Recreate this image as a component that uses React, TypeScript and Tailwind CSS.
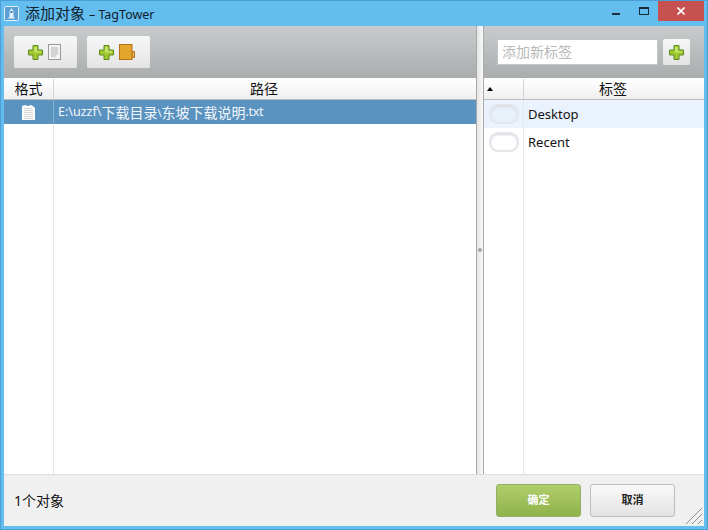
const cjk = "font-['Noto_Sans','Noto_Sans_CJK_SC',sans-serif]";

function PlusIcon() {
  return (
    <svg width="15" height="15" viewBox="0 0 15 15" className="shrink-0">
      <path d="M5 .5h5v4.500h4.500v5H10v4.500H5V10H.5V5H5z" fill="#9cc82e" stroke="#5f8a1e" />
      <path d="M6 2h3v4h4v1.500H6z" fill="#c4e36a" />
    </svg>
  );
}

function DocIcon() {
  return (
    <svg width="13" height="16" viewBox="0 0 13 16" className="shrink-0">
      <rect x=".5" y=".5" width="12" height="15" fill="#f2f2f2" stroke="#9a9a9a" />
      <path d="M3 4h7M3 6h7M3 8h7M3 10h7M3 12h5" stroke="#b5b5b5" />
    </svg>
  );
}

function FolderIcon() {
  return (
    <svg width="16" height="16" viewBox="0 0 16 16" className="shrink-0">
      <path d="M13 7.500h2.500v6H13z" fill="#f0c060" stroke="#b86f1c" />
      <rect x=".5" y=".5" width="12.500" height="15" fill="#e3a52b" stroke="#b86f1c" />
    </svg>
  );
}

function FileRowIcon() {
  return (
    <svg width="13" height="15" viewBox="0 0 13 15">
      <path d="M0 1l3-1 3 1 3-1 2 1 2 2v12H0z" fill="#fbfbfb" />
      <path d="M2 3.500h8M2 5.500h9M2 7.500h9M2 9.500h9M2 11.500h9M2 13.500h9" stroke="#d6d6d6" />
    </svg>
  );
}

function ToolButton({ children }: { children: React.ReactNode }) {
  return (
    <button className="flex h-[33px] w-[63px] items-center justify-center gap-[5px] rounded-[2px] border-b border-b-[#b4b6b6] bg-gradient-to-b from-[#f7f7f7] to-[#e4e4e4] pr-[3px]">
      {children}
    </button>
  );
}

function TagRow({ label, active }: { label: string; active?: boolean }) {
  return (
    <div className={`flex h-[28px] ${active ? "bg-[#eaf3fd]" : ""}`}>
      <div className="flex w-[40px] items-center justify-center border-r border-r-[#e3e8ec]">
        <div
          className={`h-[20px] w-[30px] rounded-[9px] border-2 border-[#e2e6ea] shadow-[inset_0_1px_2px_#d5dade] ${active ? "bg-[#e8f0fa]" : "bg-white"}`}
        />
      </div>
      <div className="flex items-center pl-[4px] pt-[1px] text-[13px] text-[#111]">{label}</div>
    </div>
  );
}

export default function App() {
  return (
    <div className={`flex h-[530px] w-[708px] flex-col overflow-hidden border border-[#4b9fd6] bg-[#63bdef] ${cjk}`}>
      <div className="flex h-[25px] shrink-0 items-center pl-[3px]">
        <svg width="15" height="15" viewBox="0 0 15 15" className="shrink-0">
          <rect x=".5" y=".5" width="14" height="14" rx="1" fill="#5b9fd6" stroke="#dff0fb" />
          <path d="M7.500 2l2 3.500v5l1.500 2H4l1.500-2v-5z" fill="#e2f0fa" />
          <rect x="6.500" y="5" width="2" height="2" fill="#2f7fc0" />
        </svg>
        <div className="ml-[6px] text-[15px] leading-none text-[#10202c]">
          添加对象 <span className="text-[12.500px]">– TagTower</span>
        </div>
        <div className="ml-auto flex h-[21px] items-start self-start">
          <div className="flex h-[20px] w-[28px] items-center justify-center pt-[6px]">
            <div className="h-[2px] w-[8px] bg-[#1a2a38]" />
          </div>
          <div className="flex h-[20px] w-[28px] items-center justify-center">
            <div className="h-[8px] w-[10px] border border-t-2 border-[#1a2a38]" />
          </div>
          <div className="mr-[3px] flex h-[20px] w-[46px] items-center justify-center bg-[#c75050]">
            <svg width="8" height="8" viewBox="0 0 8 8">
              <path d="M.5.500l7 7M7.500.500l-7 7" stroke="#fff" strokeWidth="1.600" />
            </svg>
          </div>
        </div>
      </div>

      <div className="mx-[3px] flex min-h-0 flex-1 flex-col bg-white">
        <div className="flex min-h-0 flex-1">
          <div className="flex w-[472px] shrink-0 flex-col">
            <div className="flex h-[52px] shrink-0 items-start gap-[10px] bg-gradient-to-b from-[#c9cccc] to-[#a9adad] pl-[10px] pt-[10px]">
              <ToolButton>
                <PlusIcon />
                <DocIcon />
              </ToolButton>
              <ToolButton>
                <PlusIcon />
                <FolderIcon />
              </ToolButton>
            </div>
            <div className="flex h-[22px] shrink-0 border-t border-b border-t-white border-b-[#bdbdbd] bg-gradient-to-b from-white to-[#efefef] text-[14px] leading-none text-[#111]">
              <div className="flex w-[50px] items-center justify-center border-r border-r-[#d5d5d5]">格式</div>
              <div className="flex flex-1 items-center justify-center pr-[2px]">路径</div>
            </div>
            <div className="flex h-[24px] shrink-0 bg-[#5a93c0] text-[14px] leading-none text-[#f2f7fb]">
              <div className="flex w-[50px] items-center justify-center border-r border-r-[#86b0d0]">
                <FileRowIcon />
              </div>
              <div className="flex items-center pl-[4px] pt-[1px]">
                <span className="text-[12.500px]">E:\uzzf\</span>下载目录<span className="text-[11px]">\</span>东坡下载说明
                <span className="text-[12.500px] tracking-[-0.3px]">.txt</span>
              </div>
            </div>
            <div className="flex flex-1">
              <div className="w-[50px] border-r border-r-[#e3e8ec]" />
            </div>
          </div>

          <div className="flex w-[8px] shrink-0 items-center justify-center border-x border-x-[#a9a9a9] bg-gradient-to-r from-[#e4e4e4] to-[#fafafa]">
            <div className="h-[4px] w-[4px] rounded-full bg-[#a5a5a5]" />
          </div>

          <div className="flex min-w-0 flex-1 flex-col">
            <div className="flex h-[52px] shrink-0 items-start gap-[5px] bg-gradient-to-b from-[#c9cccc] to-[#a9adad] pl-[13px] pt-[13px]">
              <div className="flex h-[26px] w-[161px] items-center border border-[#c3c6c6] bg-white pl-[4px] text-[14px] leading-none text-[#b8b8b8]">
                添加新标签
              </div>
              <button className="flex h-[27px] w-[27px] items-center justify-center rounded-[2px] border-b border-b-[#b4b6b6] bg-gradient-to-b from-[#f7f7f7] to-[#e4e4e4]">
                <PlusIcon />
              </button>
            </div>
            <div className="flex h-[22px] shrink-0 border-t border-b border-t-white border-b-[#bdbdbd] bg-gradient-to-b from-white to-[#efefef] text-[14px] leading-none text-[#111]">
              <div className="flex w-[40px] items-center border-r border-r-[#d5d5d5] pl-[3px]">
                <div className="h-0 w-0 border-x-[3px] border-b-[4px] border-x-transparent border-b-black" />
              </div>
              <div className="flex flex-1 items-center justify-center pr-[2px]">标签</div>
            </div>
            <TagRow label="Desktop" active />
            <TagRow label="Recent" />
            <div className="flex flex-1">
              <div className="w-[40px] border-r border-r-[#e3e8ec]" />
            </div>
          </div>
        </div>

        <div className="flex h-[52px] shrink-0 items-start border-t border-t-[#dcdcdc] bg-[#f0f0f0]">
          <div className="mt-[19px] pl-[10px] text-[14px] leading-none text-[#111]">1个对象</div>
          <div className="ml-auto mt-[9px] flex gap-[9px] pr-[29px]">
            <button className="h-[33px] w-[85px] rounded-[3px] border border-[#94ad68] bg-gradient-to-b from-[#b0cf6c] to-[#8fb24a] text-[11px] font-bold text-white">
              确定
            </button>
            <button className="h-[33px] w-[85px] rounded-[3px] border border-[#bcbcbc] bg-gradient-to-b from-[#fafafa] to-[#e2e2e2] text-[11px] font-bold text-[#222]">
              取消
            </button>
          </div>
          <svg width="18" height="18" viewBox="0 0 18 18" className="absolute left-[685px] top-[507px]">
            <path d="M1 17L17 1M7 17L17 7M13 17l4-4" stroke="#8f8f8f" />
          </svg>
        </div>
      </div>
      <div className="h-[3px] shrink-0" />
    </div>
  );
}
